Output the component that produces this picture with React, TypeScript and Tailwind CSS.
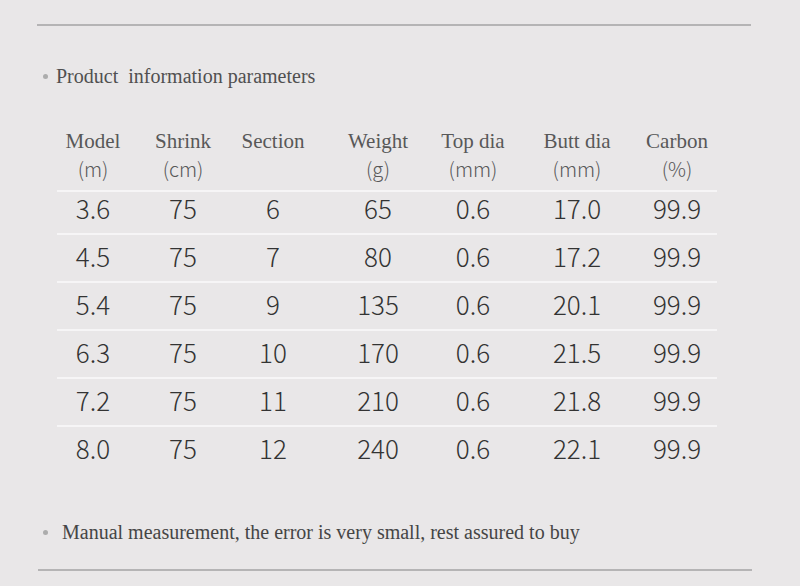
const serif = "font-['Liberation_Serif',serif]";
const sans = "font-['Noto_Sans_CJK_SC','Noto_Sans',sans-serif]";

const columns = [
  { title: "Model", unit: "(m)" },
  { title: "Shrink", unit: "(cm)" },
  { title: "Section", unit: "" },
  { title: "Weight", unit: "(g)" },
  { title: "Top dia", unit: "(mm)" },
  { title: "Butt dia", unit: "(mm)" },
  { title: "Carbon", unit: "(%)" },
];

const rows = [
  ["3.6", "75", "6", "65", "0.6", "17.0", "99.9"],
  ["4.5", "75", "7", "80", "0.6", "17.2", "99.9"],
  ["5.4", "75", "9", "135", "0.6", "20.1", "99.9"],
  ["6.3", "75", "10", "170", "0.6", "21.5", "99.9"],
  ["7.2", "75", "11", "210", "0.6", "21.8", "99.9"],
  ["8.0", "75", "12", "240", "0.6", "22.1", "99.9"],
];

// column tracks are sized so that each centre lines up with the picture
const grid = "grid grid-cols-[90px_90px_90px_120px_70px_138px_62px] -ml-[9px] w-[660px]";

const Bullet = () => <span className="w-[5px] h-[5px] rounded-full bg-[#acacac] shrink-0" />;

export default function App() {
  return (
    <div className="w-[800px] h-[586px] bg-[#e9e7e8] pt-[24px] overflow-hidden">
      <div className="ml-[37px] w-[714px] h-[2px] bg-[#b5b4b5]" />

      <div className={`mt-[38px] ml-[43px] flex items-center gap-[8px] h-[24px] text-[20px] text-[#505050] ${serif}`}>
        <Bullet />
        <span className="whitespace-pre">Product  information parameters</span>
      </div>

      <div className="mt-[40px] ml-[57px] w-[660px]">
        <div className={`${grid} pb-[8px]`}>
          {columns.map((c) => (
            <div key={c.title} className="flex flex-col items-center text-[#585858]">
              <span className={`${serif} text-[21px] leading-[27px] whitespace-nowrap`}>{c.title}</span>
              <span className={`${sans} font-light text-[20px] leading-[27px] h-[27px]`}>{c.unit}</span>
            </div>
          ))}
        </div>
        {rows.map((r, i) => (
          <div
            key={i}
            className={`border-t-2 border-[#f6f5f6] ${i === 0 ? "h-[43px] pb-[9px]" : "h-[48px] pb-[5px]"}`}
          >
            <div className={`${grid} h-full items-center`}>
              {r.map((v, j) => (
                <div key={j} className="flex justify-center">
                  <span className={`${sans} font-light text-[26px] leading-none text-[#333]`}>{v}</span>
                </div>
              ))}
            </div>
          </div>
        ))}
      </div>

      <div className={`mt-[47px] ml-[43px] flex items-center gap-[14px] h-[24px] text-[20px] text-[#454545] ${serif}`}>
        <Bullet />
        <span>Manual measurement, the error is very small, rest assured to buy</span>
      </div>

      <div className="mt-[25px] ml-[38px] w-[714px] h-[2px] bg-[#b5b4b5]" />
    </div>
  );
}
